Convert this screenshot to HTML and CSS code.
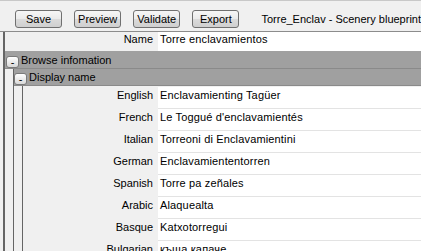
FILE: index.html
```
<!DOCTYPE html>
<html>
<head>
<meta charset="utf-8">
<link rel="stylesheet" href="styles.css">
</head>
<body>
<div class="toolbar">
  <button class="btn">Save</button>
  <button class="btn">Preview</button>
  <button class="btn">Validate</button>
  <button class="btn">Export</button>
  <span class="title">Torre_Enclav - Scenery blueprint</span>
</div>
<div class="panel">
  <div class="row name-row">
    <div class="label">Name</div>
    <div class="value">Torre enclavamientos</div>
  </div>
  <div class="ghead top-head"><span class="toggle">-</span><span class="gtitle">Browse infomation</span></div>
  <div class="gbody outer">
    <div class="ghead sub-head"><span class="toggle">-</span><span class="gtitle">Display name</span></div>
    <div class="gbody inner">
      <div class="row lang"><div class="label">English</div><div class="value">Enclavamienting Tagüer</div></div>
      <div class="row lang"><div class="label">French</div><div class="value">Le Toggué d'enclavamientés</div></div>
      <div class="row lang"><div class="label">Italian</div><div class="value">Torreoni di Enclavamientini</div></div>
      <div class="row lang"><div class="label">German</div><div class="value">Enclavamiententorren</div></div>
      <div class="row lang"><div class="label">Spanish</div><div class="value">Torre pa zeñales</div></div>
      <div class="row lang"><div class="label">Arabic</div><div class="value">Alaquealta</div></div>
      <div class="row lang"><div class="label">Basque</div><div class="value">Katxotorregui</div></div>
      <div class="row lang"><div class="label">Bulgarian</div><div class="value">къща капаче</div></div>
    </div>
  </div>
</div>
</body>
</html>
```
FILE: styles.css
```
html, body {
  margin: 0;
  padding: 0;
  background: #f0f0f0;
  font-family: "Liberation Sans", Arial, sans-serif;
  font-size: 11px;
  color: #000;
  overflow: hidden;
  height: 251px;
}

.toolbar {
  border-top: 1px solid #c8c8c8;
  border-bottom: 1px solid #8c8c8c;
  box-sizing: border-box;
  height: 32px;
  display: flex;
  align-items: flex-start;
  padding: 9px 0 0 15px;
  gap: 12px;
}

.btn {
  width: 48px;
  height: 18px;
  padding: 0;
  margin: 0;
  border: 1px solid #707070;
  border-radius: 3px;
  background: linear-gradient(#f6f6f6 0%, #ebebeb 48%, #dbdbdb 52%, #cfcfcf 100%);
  font-family: "Liberation Sans", Arial, sans-serif;
  font-size: 11px;
  color: #000;
  line-height: 16px;
}

.title {
  margin-left: 10px;
  line-height: 18px;
  white-space: nowrap;
}

.panel {
  margin-left: 3px;
  border-left: 2px solid #656565;
  height: 219px;
  overflow: hidden;
}

.row {
  display: flex;
}

.label {
  flex: none;
  text-align: right;
  padding-right: 5px;
  box-sizing: border-box;
  line-height: 14px;
}

.value {
  flex: 1;
  background: #fff;
  padding-left: 2px;
  line-height: 14px;
  white-space: nowrap;
  letter-spacing: 0.15px;
}

.name-row {
  height: 19px;
}

.name-row .label {
  width: 153px;
}

.ghead {
  display: flex;
  align-items: flex-end;
  background: #a0a0a0;
  border-bottom: 1px solid #8a8a8a;
  box-sizing: border-box;
}

.top-head {
  height: 18px;
  padding-left: 1px;
}

.sub-head {
  height: 17px;
  padding-left: 0;
}

.toggle {
  width: 13px;
  height: 12px;
  box-sizing: border-box;
  border: 1px solid #7a7a7a;
  border-radius: 3px;
  background: linear-gradient(#ffffff, #d8d8d8);
  font-size: 11px;
  line-height: 10px;
  text-align: center;
  flex: none;
}

.gtitle {
  align-self: center;
  margin-left: 2px;
  line-height: 14px;
}

.outer {
  margin-left: 8px;
  border-left: 1px solid #656565;
}

.inner {
  margin-left: 8px;
  border-left: 1px solid #656565;
  padding-top: 1px;
}

.lang {
  height: 22px;
}

.lang .label {
  width: 135px;
  padding-top: 1px;
}

.lang .value {
  padding-top: 1px;
  border-bottom: 1px solid #e3e3e3;
}
```
